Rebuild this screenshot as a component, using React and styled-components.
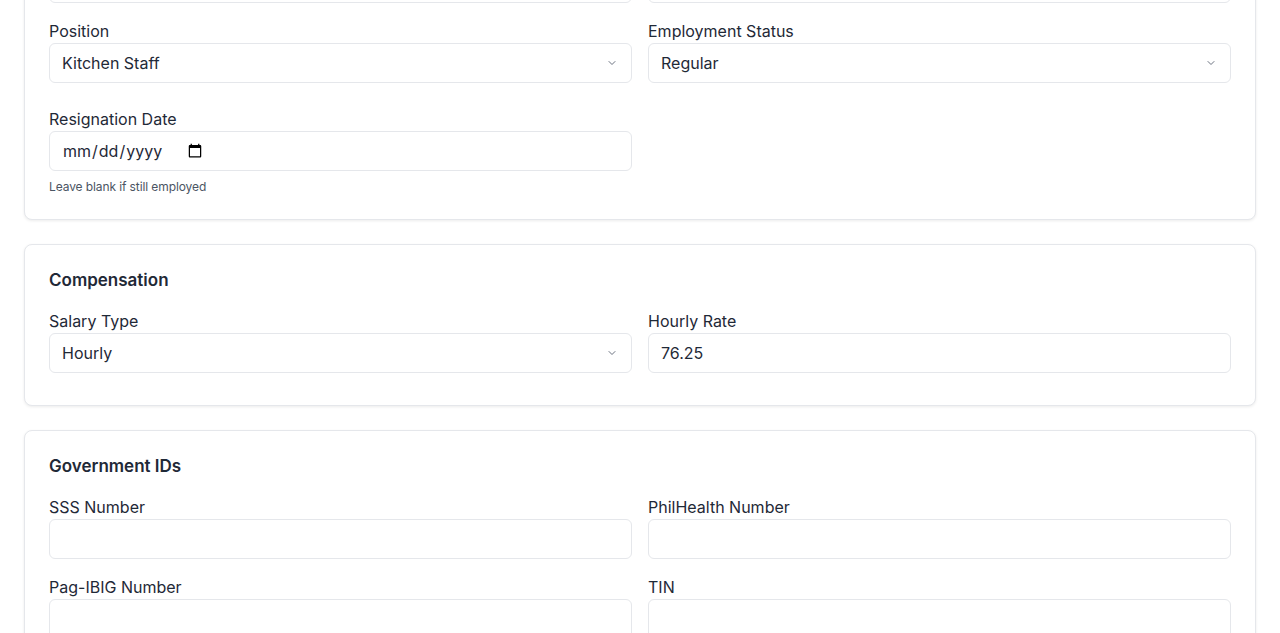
import React from 'react';
import styled, { createGlobalStyle } from 'styled-components';

const GlobalStyle = createGlobalStyle`
  html, body {
    margin: 0;
    background: #ffffff;
    font-family: 'Inter', 'Noto Sans', sans-serif;
    color: #1f2937;
    overflow: hidden;
  }
  * { box-sizing: border-box; }
`;

// page is shown scrolled; the first card starts above the viewport
const Page = styled.div`
  padding: 24px;
  margin-top: -150px;
  display: flex;
  flex-direction: column;
  gap: 24px;
`;

const Card = styled.section`
  background: #fff;
  border: 1px solid #e5e7eb;
  border-radius: 8px;
  box-shadow: 0 1px 3px rgba(0, 0, 0, 0.08);
  padding: 24px 24px ${p => p.$bottom || 24}px;
`;

const CardTitle = styled.h3`
  margin: 0 0 18px;
  font-size: 17px;
  line-height: 22px;
  font-weight: 600;
  color: #1f2937;
`;

const Grid = styled.div`
  display: grid;
  grid-template-columns: 1fr 1fr;
  column-gap: 16px;
  row-gap: 16px;
  margin-top: ${p => p.$top || 0}px;
`;

const Field = styled.div`
  display: flex;
  flex-direction: column;
  min-width: 0;
`;

const Label = styled.label`
  font-size: 16px;
  line-height: 24px;
  font-weight: 400;
  color: #1f2937;
`;

const Input = styled.input`
  height: 40px;
  width: 100%;
  border: 1px solid #e5e7eb;
  border-radius: 6px;
  padding: 0 12px;
  font-family: inherit;
  font-size: 16px;
  color: #1f2937;
  background: #fff;
  outline: none;
`;

const DateInput = styled(Input)`
  &::-webkit-datetime-edit {
    flex: 0 0 auto;
  }
  &::-webkit-datetime-edit-fields-wrapper {
    padding: 0;
  }
`;

const SelectWrap = styled.div`
  position: relative;
`;

const Select = styled.select`
  appearance: none;
  -webkit-appearance: none;
  height: 40px;
  width: 100%;
  border: 1px solid #e5e7eb;
  border-radius: 6px;
  padding: 0 36px 0 12px;
  font-family: inherit;
  font-size: 16px;
  color: #1f2937;
  background: #fff;
  outline: none;
`;

const Chevron = styled.svg`
  position: absolute;
  right: 14px;
  top: 50%;
  transform: translateY(-50%);
  pointer-events: none;
`;

const Hint = styled.p`
  margin: 8px 0 0;
  font-size: 12px;
  line-height: 16px;
  color: #4b5563;
  letter-spacing: -0.1px;
`;

const SelectField = ({ label, value, options }) => (
  <Field>
    <Label>{label}</Label>
    <SelectWrap>
      <Select defaultValue={value}>
        {options.map(o => <option key={o}>{o}</option>)}
      </Select>
      <Chevron width="12" height="12" viewBox="0 0 24 24" fill="none" stroke="#6b7280" strokeWidth="2" strokeLinecap="round" strokeLinejoin="round">
        <path d="M6 9l6 6 6-6" />
      </Chevron>
    </SelectWrap>
  </Field>
);

const TextField = ({ label, value, type = 'text' }) => (
  <Field>
    <Label>{label}</Label>
    <Input type={type} defaultValue={value} />
  </Field>
);

const App = () => (
  <>
    <GlobalStyle />
    <Page>
      <Card>
        <CardTitle>Employment Details</CardTitle>
        <Grid>
          <TextField label="Date Hired" value="" />
          <TextField label="Department" value="" />
          <SelectField label="Position" value="Kitchen Staff" options={['Kitchen Staff', 'Cashier', 'Server', 'Manager']} />
          <SelectField label="Employment Status" value="Regular" options={['Regular', 'Probationary', 'Contractual']} />
        </Grid>
        <Grid $top={24}>
          <Field>
            <Label>Resignation Date</Label>
            <DateInput type="date" />
            <Hint>Leave blank if still employed</Hint>
          </Field>
        </Grid>
      </Card>

      <Card $bottom={32}>
        <CardTitle>Compensation</CardTitle>
        <Grid>
          <SelectField label="Salary Type" value="Hourly" options={['Hourly', 'Daily', 'Monthly']} />
          <TextField label="Hourly Rate" value="76.25" />
        </Grid>
      </Card>

      <Card>
        <CardTitle>Government IDs</CardTitle>
        <Grid>
          <TextField label="SSS Number" value="" />
          <TextField label="PhilHealth Number" value="" />
          <TextField label="Pag-IBIG Number" value="" />
          <TextField label="TIN" value="" />
        </Grid>
      </Card>
    </Page>
  </>
);

export default App;
